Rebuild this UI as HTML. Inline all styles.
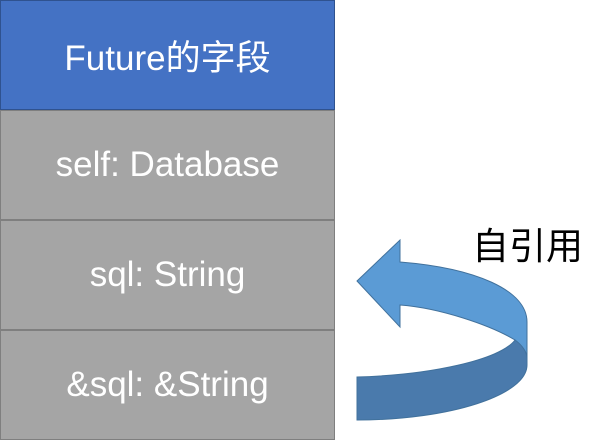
<!DOCTYPE html>
<html><head><meta charset="utf-8"><style>
body{margin:0;width:604px;height:440px;background:#fff;overflow:hidden;position:relative;font-family:"Liberation Sans","Noto Sans CJK SC",sans-serif}
.b{position:absolute;left:0;width:333px;height:108px;border:1px solid #7f7f7f;background:#a5a5a5;color:#fff;font-size:35px;display:flex;align-items:center;justify-content:center}
.t{position:absolute;left:472px;top:216px;font-size:37px;color:#000;font-family:"Noto Sans CJK SC",sans-serif}
</style></head><body>
<div class="b" style="top:0;background:#4472c4;border-color:#2f528f">Future的字段</div>
<div class="b" style="top:110px">self: Database</div>
<div class="b" style="top:220px">sql: String</div>
<div class="b" style="top:330px">&amp;sql: &amp;String</div>
<div class="t">自引用</div>
<svg width="604" height="440" style="position:absolute;left:0;top:0">
<path d="M357,281 L400,240 L400,262 C475,268 527,290 527,322 L527,358 C524,350 520,344 515,340 C490,325 440,308 400,305 L400,327 Z" fill="#5b9bd5" stroke="#41719c" stroke-width="1"/>
<path d="M357,377 C430,375 500,360 515,340 C522,345 527,352 527,358 L527,365 C527,395 450,420 357,420 Z" fill="#4a7aac" stroke="#41719c" stroke-width="1"/>
</svg>
</body></html>
